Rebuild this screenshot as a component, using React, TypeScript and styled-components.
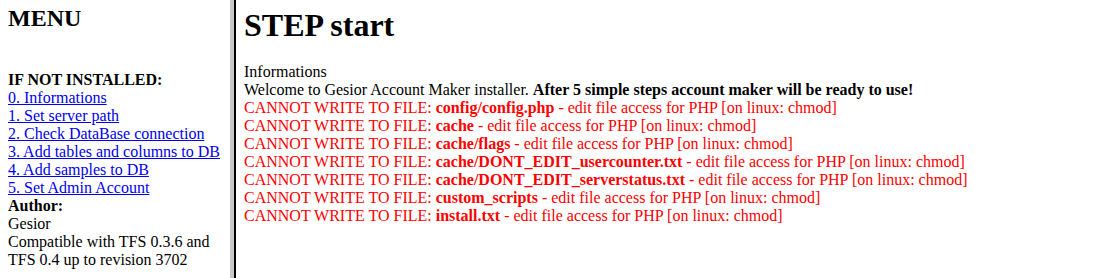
import React from 'react';
import styled, { createGlobalStyle } from 'styled-components';

const GlobalStyle = createGlobalStyle`
  html, body {
    margin: 0;
    padding: 0;
    background: #ffffff;
  }
  body {
    font-family: "Liberation Serif", "Times New Roman", serif;
    font-size: 16px;
    color: #000000;
  }
`;

const Frameset = styled.div`
  display: flex;
  height: 100vh;
  overflow: hidden;
`;

const MenuFrame = styled.div`
  width: 230px;
  flex-shrink: 0;
  box-sizing: border-box;
  padding: 5px 8px 0 8px;
`;

const FrameBorder = styled.div`
  width: 4px;
  flex-shrink: 0;
  background: #c8c8c8;
  border-right: 2px solid #000000;
`;

const MainFrame = styled.div`
  flex: 1;
  box-sizing: border-box;
  padding: 7px 8px 0 8px;
`;

const MenuTitle = styled.h2`
  font-size: 24px;
  font-weight: bold;
  margin: 0 0 39px 0;
`;

const PageTitle = styled.h1`
  font-size: 32px;
  font-weight: bold;
  margin: 0 0 19px 0;
`;

const Line = styled.div`
  line-height: 18px;
`;

const Bold = styled.b`
  font-weight: bold;
`;

const MenuLink = styled.a`
  color: #0000ee;
  text-decoration: underline;
  cursor: pointer;
`;

const ErrorLine = styled.div`
  line-height: 18px;
  color: #ff0000;
`;

const steps = [
  '0. Informations',
  '1. Set server path',
  '2. Check DataBase connection',
  '3. Add tables and columns to DB',
  '4. Add samples to DB',
  '5. Set Admin Account',
];

const files = [
  'config/config.php',
  'cache',
  'cache/flags',
  'cache/DONT_EDIT_usercounter.txt',
  'cache/DONT_EDIT_serverstatus.txt',
  'custom_scripts',
  'install.txt',
];

const App: React.FC = () => {
  return (
    <>
      <GlobalStyle />
      <Frameset>
        <MenuFrame>
          <MenuTitle>MENU</MenuTitle>
          <Line>
            <Bold>IF NOT INSTALLED:</Bold>
          </Line>
          {steps.map(step => (
            <Line key={step}>
              <MenuLink href="#">{step}</MenuLink>
            </Line>
          ))}
          <Line>
            <Bold>Author:</Bold>
          </Line>
          <Line>Gesior</Line>
          <Line>Compatible with TFS 0.3.6 and TFS 0.4 up to revision 3702</Line>
        </MenuFrame>
        <FrameBorder />
        <MainFrame>
          <PageTitle>STEP start</PageTitle>
          <Line>Informations</Line>
          <Line>
            Welcome to Gesior Account Maker installer.{' '}
            <Bold>After 5 simple steps account maker will be ready to use!</Bold>
          </Line>
          {files.map(file => (
            <ErrorLine key={file}>
              CANNOT WRITE TO FILE: <Bold>{file}</Bold> - edit file access for PHP [on linux: chmod]
            </ErrorLine>
          ))}
        </MainFrame>
      </Frameset>
    </>
  );
};

export default App;
